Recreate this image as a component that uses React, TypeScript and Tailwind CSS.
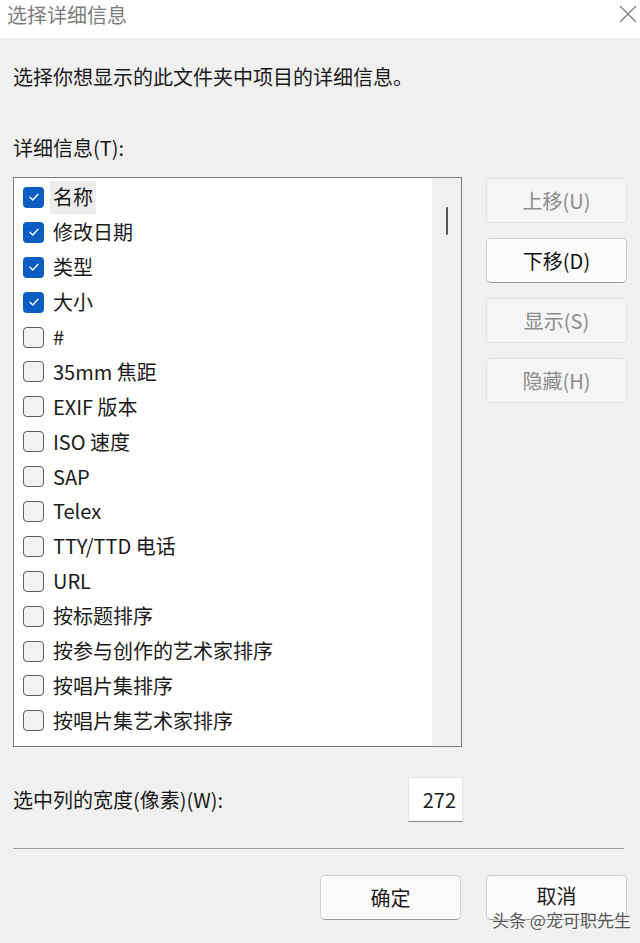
import React from "react";

const items: { label: string; checked: boolean; selected?: boolean }[] = [
  { label: "名称", checked: true, selected: true },
  { label: "修改日期", checked: true },
  { label: "类型", checked: true },
  { label: "大小", checked: true },
  { label: "#", checked: false },
  { label: "35mm 焦距", checked: false },
  { label: "EXIF 版本", checked: false },
  { label: "ISO 速度", checked: false },
  { label: "SAP", checked: false },
  { label: "Telex", checked: false },
  { label: "TTY/TTD 电话", checked: false },
  { label: "URL", checked: false },
  { label: "按标题排序", checked: false },
  { label: "按参与创作的艺术家排序", checked: false },
  { label: "按唱片集排序", checked: false },
  { label: "按唱片集艺术家排序", checked: false },
];

function CheckBox({ checked }: { checked: boolean }) {
  if (checked) {
    return (
      <div className="w-[21px] h-[21px] rounded-[4px] bg-[#0b5dc4] flex items-center justify-center shrink-0">
        <svg width="12" height="12" viewBox="0 0 12 12" fill="none">
          <path d="M2 6.3 L4.8 9 L10 3.2" stroke="white" strokeWidth="1.3" strokeLinecap="round" strokeLinejoin="round" />
        </svg>
      </div>
    );
  }
  return <div className="w-[21px] h-[21px] rounded-[4px] border border-[#5e5e5e] bg-[#f2f2f2] shrink-0" />;
}

function SideButton({ label, enabled }: { label: string; enabled?: boolean }) {
  return (
    <div
      className={
        enabled
          ? "h-[45px] w-[141px] rounded-[5px] border border-[#cfcfcf] border-b-[#9a9a9a] bg-[#fbfbfb] flex items-center justify-center text-[20px] text-[#111]"
          : "h-[45px] w-[141px] rounded-[5px] border border-[#e2e2e2] bg-[#f5f5f5] flex items-center justify-center text-[20px] text-[#8c8c8c]"
      }
    >
      {label}
    </div>
  );
}

export default function App() {
  return (
    <div
      className="w-[640px] h-[943px] bg-[#f0f0f0] flex flex-col overflow-hidden relative text-[#1a1a1a]"
      style={{ fontFamily: '"Noto Sans CJK SC", "Noto Sans", sans-serif' }}
    >
      {/* Title bar */}
      <div className="h-[38px] bg-white flex items-start justify-between shrink-0">
        <div className="pl-[7px] text-[20px] leading-[30px] text-[#7d7d7d]">选择详细信息</div>
        <svg width="20" height="20" viewBox="0 0 20 20" className="mt-[4px] mr-[2px]">
          <path d="M2 2 L18 18 M18 2 L2 18" stroke="#777" strokeWidth="1.2" />
        </svg>
      </div>

      {/* Body */}
      <div className="px-[13px] flex flex-col">
        <div className="pt-[25px] text-[20px] leading-[28px]">选择你想显示的此文件夹中项目的详细信息。</div>
        <div className="mt-[43px] text-[20px] leading-[28px]">详细信息(T):</div>

        <div className="mt-[15px] flex gap-[24px]">
          {/* List box */}
          <div className="w-[450px] h-[570px] border border-[#7c7c7c] bg-white flex">
            <div className="flex-1 pt-[2px] flex flex-col">
              {items.map((it) => (
                <div key={it.label} className="h-[34.9px] flex items-center pl-[9px] gap-[6px]">
                  <CheckBox checked={it.checked} />
                  <div
                    className={
                      (it.selected ? "bg-[#ececec] " : "") +
                      "px-[3px] h-[33px] flex items-center text-[20px] whitespace-nowrap"
                    }
                  >
                    {it.label}
                  </div>
                </div>
              ))}
            </div>
            <div className="w-[29px] bg-[#f0f0f0] flex justify-center pt-[29px]">
              <div className="w-[2px] h-[28px] bg-[#555] rounded-full" />
            </div>
          </div>

          {/* Side buttons */}
          <div className="flex flex-col gap-[15px] pt-[1px]">
            <SideButton label="上移(U)" />
            <SideButton label="下移(D)" enabled />
            <SideButton label="显示(S)" />
            <SideButton label="隐藏(H)" />
          </div>
        </div>

        {/* Width row */}
        <div className="mt-[30px] w-[450px] flex items-center justify-between">
          <div className="text-[20px]">选中列的宽度(像素)(W):</div>
          <div className="w-[55px] h-[45px] bg-white border border-[#e4e4e4] border-b-[#8a8a8a] flex items-center justify-end pr-[6px] text-[20px]">
            272
          </div>
        </div>

        <div className="mt-[26px] w-[611px] h-px bg-[#9e9e9e]" />

        <div className="mt-[26px] flex justify-end gap-[25px]">
          <div className="h-[45px] w-[141px] rounded-[5px] border border-[#cfcfcf] border-b-[#9a9a9a] bg-[#fbfbfb] flex items-center justify-center text-[20px]">
            确定
          </div>
          <div className="h-[45px] w-[141px] rounded-[5px] border border-[#cfcfcf] border-b-[#9a9a9a] bg-[#fbfbfb] flex items-start justify-center pt-[5px] text-[20px]">
            取消
          </div>
        </div>
      </div>

      {/* Watermark */}
      <div
        className="absolute left-[492px] top-[908px] text-[17px] leading-[24px] text-[#555] whitespace-nowrap"
        style={{ textShadow: "0 0 2px #fff, 0 0 2px #fff" }}
      >
        头条 @宠可职先生
      </div>
    </div>
  );
}
